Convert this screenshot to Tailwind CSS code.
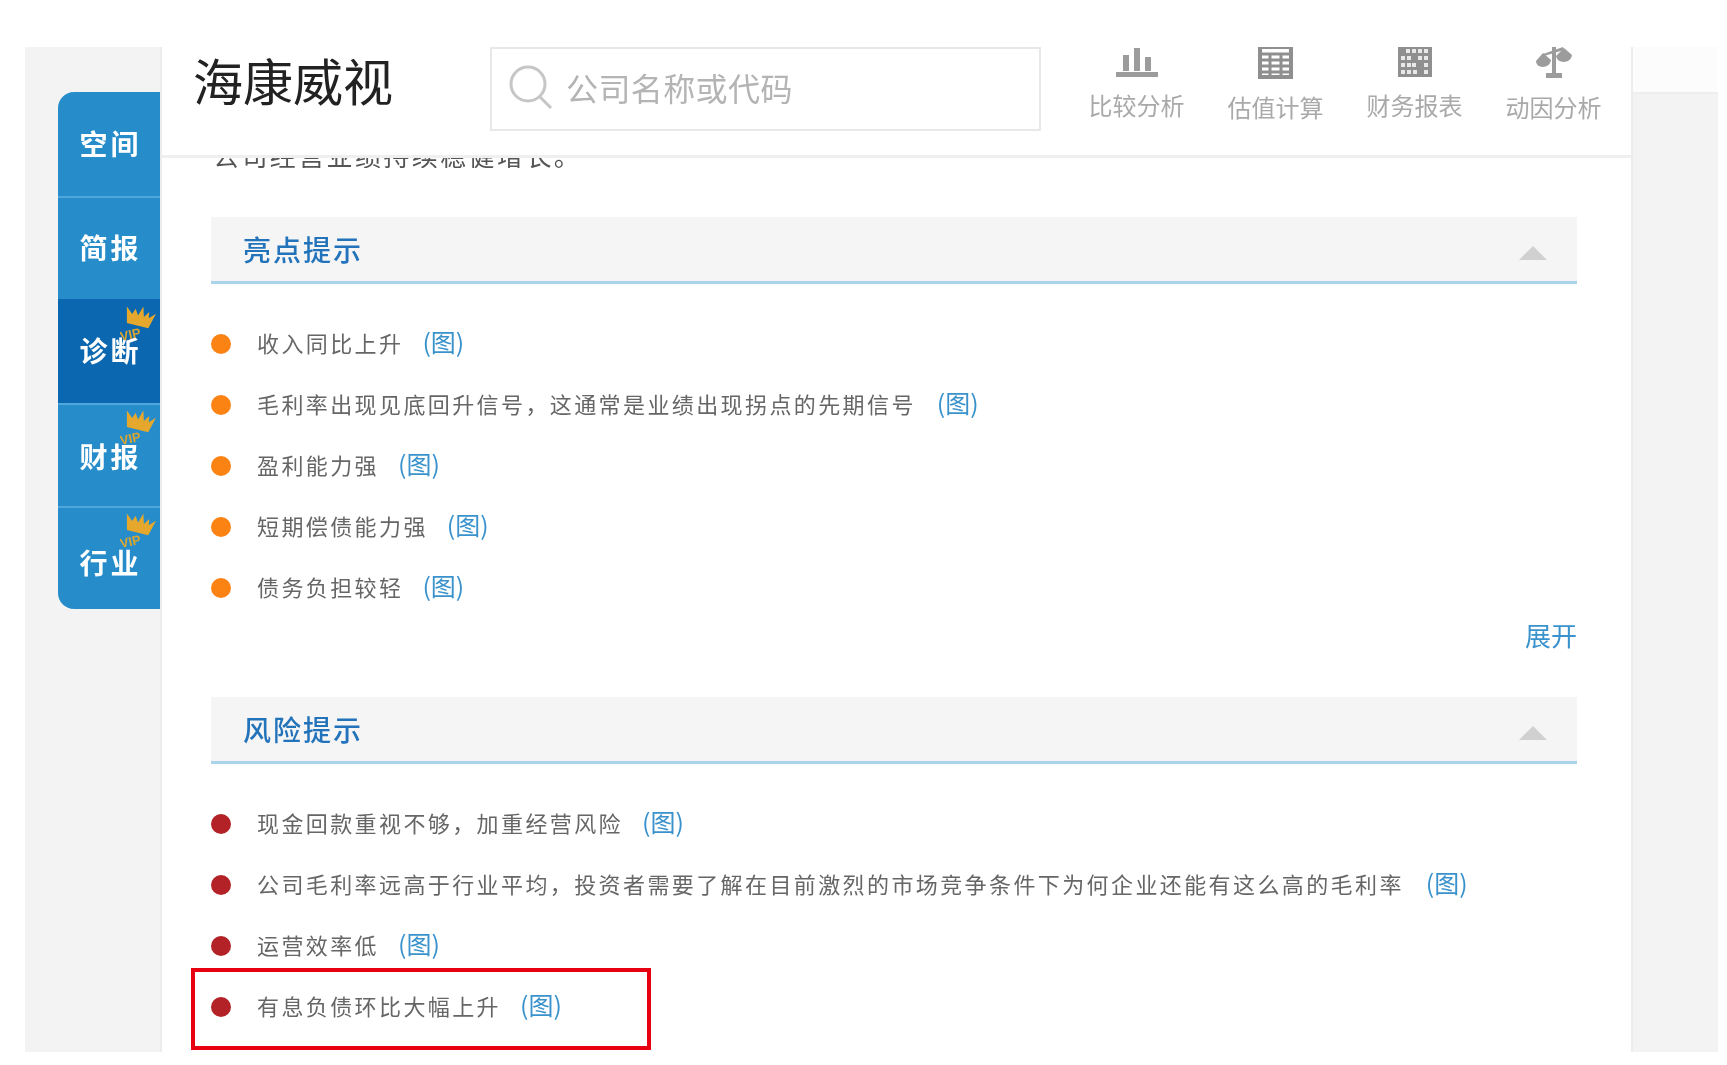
<!DOCTYPE html>
<html lang="zh-CN">

<head>
    <meta charset="UTF-8" />
    <meta name="viewport" content="width=device-width, initial-scale=1.0" />
    <script src="https://cdn.jsdelivr.net/npm/@tailwindcss/browser@4"></script>
    <title>海康威视</title>
</head>

<body class="bg-white">
    <div class="w-[1727px] h-[1065px] pt-[47px] pl-[25px] overflow-hidden bg-white blur-[0.7px] font-['Noto_Sans_CJK_SC','Noto_Sans',sans-serif]">
        <div class="relative flex w-[1693px] h-[1005px] overflow-hidden bg-[#f3f3f3]">

            <!-- Side tabs -->
            <aside class="w-[135px] shrink-0 pt-[45px] pl-[33px]">
                <nav class="w-[102px] h-[517px] flex flex-col rounded-l-[16px] overflow-hidden bg-[#268dca] text-white text-[28px] font-bold tracking-[3px]">
                    <a class="h-[104px] pl-[3px] pb-[3px] flex items-center justify-center">空间</a>
                    <a class="h-[103px] pl-[3px] pb-[3px] flex items-center justify-center border-t-2 border-[#4fa6db]">简报</a>
                    <a class="relative h-[104px] pl-[3px] pb-[2px] flex items-center justify-center bg-[#0b68b0]">诊断
                        <svg class="absolute right-[2px] top-[5px] w-[38px] h-[38px]" viewBox="0 0 38 38">
                            <path transform="rotate(14 20 12)" d="M9 22 L5 6 L12 12 L14 6 L18 12 L21 2 L24 12 L28 6 L29 12 L35 6 L31 22 Z" fill="#e5a82d" />
                            <text transform="translate(1 37) rotate(-12)" font-size="13" font-weight="700" letter-spacing="0" fill="#d9a531" font-family="Liberation Sans, sans-serif">VIP</text>
                        </svg>
                    </a>
                    <a class="relative h-[103px] pl-[3px] flex items-center justify-center border-t-2 border-[#4fa6db]">财报
                        <svg class="absolute right-[2px] top-[3px] w-[38px] h-[38px]" viewBox="0 0 38 38">
                            <path transform="rotate(14 20 12)" d="M9 22 L5 6 L12 12 L14 6 L18 12 L21 2 L24 12 L28 6 L29 12 L35 6 L31 22 Z" fill="#e5a82d" />
                            <text transform="translate(1 37) rotate(-12)" font-size="13" font-weight="700" letter-spacing="0" fill="#d9a531" font-family="Liberation Sans, sans-serif">VIP</text>
                        </svg>
                    </a>
                    <a class="relative h-[103px] pl-[3px] pt-[6px] flex items-center justify-center border-t-2 border-[#4fa6db]">行业
                        <svg class="absolute right-[2px] top-[3px] w-[38px] h-[38px]" viewBox="0 0 38 38">
                            <path transform="rotate(14 20 12)" d="M9 22 L5 6 L12 12 L14 6 L18 12 L21 2 L24 12 L28 6 L29 12 L35 6 L31 22 Z" fill="#e5a82d" />
                            <text transform="translate(1 37) rotate(-12)" font-size="13" font-weight="700" letter-spacing="0" fill="#d9a531" font-family="Liberation Sans, sans-serif">VIP</text>
                        </svg>
                    </a>
                </nav>
            </aside>

            <!-- Main panel -->
            <main class="w-[1473px] shrink-0 bg-white border-x-2 border-[#ececec]">
                <header class="flex h-[111px] border-b-[3px] border-[#efefef] pl-[31px]">
                    <h1 class="w-[297px] shrink-0 pt-[1px] text-[50px] leading-[62px] font-normal text-[#222]">海康威视</h1>
                    <div class="w-[551px] h-[84px] shrink-0 flex items-center gap-[12px] pl-[16px] pb-[5px] border-2 border-[#e8e8e8] text-[32px] tracking-[0.4px] text-[#b4b4b4]">
                        <svg class="w-[46px] h-[46px] shrink-0" viewBox="0 0 46 46" fill="none" stroke="#c6c6c6">
                            <circle cx="20" cy="20" r="17" stroke-width="3" />
                            <path d="M32 33 L43 44" stroke-width="3" />
                        </svg>
                        <span>公司名称或代码</span>
                    </div>
                    <nav class="ml-[26px] flex text-[24px] leading-[32px] text-[#a9a9a9]">
                        <a class="w-[139px] flex flex-col items-center">
                            <svg class="w-[42px] h-[30px] mb-[12px]" viewBox="0 0 42 30" fill="#9c9c9c">
                                <rect x="7" y="8" width="6" height="16" />
                                <rect x="18" y="1" width="6" height="23" />
                                <rect x="29" y="10" width="6" height="14" />
                                <rect x="0" y="25" width="42" height="5" />
                            </svg>
                            <span>比较分析</span>
                        </a>
                        <a class="w-[139px] flex flex-col items-center">
                            <svg class="w-[35px] h-[32px] mb-[12px]" viewBox="0 0 35 32" fill="none" stroke="#8f8f8f">
                                <rect x="2" y="0" width="31" height="30" stroke-width="4" />
                                <path d="M3 7 H32 M3 13 H32 M3 19 H32 M3 25 H32 M12 7 V30 M23 7 V30" stroke-width="3" />
                            </svg>
                            <span>估值计算</span>
                        </a>
                        <a class="w-[139px] flex flex-col items-center">
                            <svg class="w-[34px] h-[30px] mb-[12px]" viewBox="0 0 34 30">
                                <rect width="34" height="30" fill="#8f8f8f" />
                                <path d="M8 2 H12 V6 H8 Z M14 2 H18 V6 H14 Z M20 2 H24 V6 H20 Z M26 2 H30 V6 H26 Z M3 9 H7 V13 H3 Z M9 9 H13 V13 H9 Z M20 9 H24 V13 H20 Z M26 9 H30 V13 H26 Z M3 16 H7 V20 H3 Z M9 16 H13 V20 H9 Z M14 16 H18 V20 H14 Z M26 16 H30 V20 H26 Z M3 23 H7 V27 H3 Z M9 23 H13 V27 H9 Z M15 23 H19 V27 H15 Z M26 23 H30 V27 H26 Z" fill="#e8e8e8" />
                            </svg>
                            <span>财务报表</span>
                        </a>
                        <a class="w-[139px] flex flex-col items-center">
                            <svg class="w-[38px] h-[32px] mb-[12px]" viewBox="0 0 38 32" fill="#9c9c9c">
                                <path d="M17 0 H21 V26 H27 V31 H11 V26 H17 Z" />
                                <path d="M8 6 L1 14 C1 22 15 22 16 13 Z M29 1 L21 9 C22 17 36 17 37 8 Z" />
                                <path d="M8 7 L28 0 L29 3 L9 9 Z" />
                            </svg>
                            <span>动因分析</span>
                        </a>
                    </nav>
                </header>

                <div class="pl-[49px]">
                    <div class="h-[10px] overflow-hidden">
                        <p class="-mt-[18px] pl-[2px] text-[26px] leading-[30px] tracking-[2.4px] text-[#555]">公司经营业绩持续稳健增长。</p>
                    </div>

                    <section class="w-[1366px] mt-[49px]">
                        <div class="flex items-center justify-between h-[67px] pl-[32px] pr-[30px] bg-[#f5f5f5] border-b-[3px] border-[#a9d4ec]">
                            <h2 class="text-[28px] tracking-[2px] font-medium text-[#2373bb]">亮点提示</h2>
                            <span class="mt-[8px] w-0 h-0 border-x-[14px] border-x-transparent border-b-[14px] border-b-[#d0d0d0]"></span>
                        </div>
                        <ul class="mt-[30px] text-[22px] tracking-[2.4px] text-[#666]">
                            <li class="h-[61px] pb-[5px] flex items-center">
                                <span class="mt-[3px] w-[20px] h-[20px] rounded-full bg-[#fb8313] mr-[26px]"></span>收入同比上升
                                <a class="ml-[19px] text-[25px] tracking-normal text-[#3a92cc]">(图)</a>
                            </li>
                            <li class="h-[61px] pb-[5px] flex items-center">
                                <span class="mt-[3px] w-[20px] h-[20px] rounded-full bg-[#fb8313] mr-[26px]"></span>毛利率出现见底回升信号，这通常是业绩出现拐点的先期信号
                                <a class="ml-[21px] text-[25px] tracking-normal text-[#3a92cc]">(图)</a>
                            </li>
                            <li class="h-[61px] pb-[5px] flex items-center">
                                <span class="mt-[3px] w-[20px] h-[20px] rounded-full bg-[#fb8313] mr-[26px]"></span>盈利能力强
                                <a class="ml-[19px] text-[25px] tracking-normal text-[#3a92cc]">(图)</a>
                            </li>
                            <li class="h-[61px] pb-[5px] flex items-center">
                                <span class="mt-[3px] w-[20px] h-[20px] rounded-full bg-[#fb8313] mr-[26px]"></span>短期偿债能力强
                                <a class="ml-[19px] text-[25px] tracking-normal text-[#3a92cc]">(图)</a>
                            </li>
                            <li class="h-[61px] pb-[5px] flex items-center">
                                <span class="mt-[3px] w-[20px] h-[20px] rounded-full bg-[#fb8313] mr-[26px]"></span>债务负担较轻
                                <a class="ml-[19px] text-[25px] tracking-normal text-[#3a92cc]">(图)</a>
                            </li>
                        </ul>
                        <div class="h-[36px] pb-[6px] flex items-center justify-end text-[26px] text-[#3a92cc]">展开</div>
                    </section>

                    <section class="w-[1366px] mt-[42px]">
                        <div class="flex items-center justify-between h-[67px] pl-[32px] pr-[30px] bg-[#f5f5f5] border-b-[3px] border-[#a9d4ec]">
                            <h2 class="text-[28px] tracking-[2px] font-medium text-[#2373bb]">风险提示</h2>
                            <span class="mt-[8px] w-0 h-0 border-x-[14px] border-x-transparent border-b-[14px] border-b-[#d0d0d0]"></span>
                        </div>
                        <ul class="mt-[30px] text-[22px] tracking-[2.4px] text-[#666]">
                            <li class="h-[61px] pb-[5px] flex items-center">
                                <span class="mt-[3px] w-[20px] h-[20px] rounded-full bg-[#b32226] mr-[26px]"></span>现金回款重视不够，加重经营风险
                                <a class="ml-[19px] text-[25px] tracking-normal text-[#3a92cc]">(图)</a>
                            </li>
                            <li class="h-[61px] pb-[5px] flex items-center">
                                <span class="mt-[3px] w-[20px] h-[20px] rounded-full bg-[#b32226] mr-[26px]"></span>公司毛利率远高于行业平均，投资者需要了解在目前激烈的市场竞争条件下为何企业还能有这么高的毛利率
                                <a class="ml-[22px] text-[25px] tracking-normal text-[#3a92cc]">(图)</a>
                            </li>
                            <li class="h-[61px] pb-[5px] flex items-center">
                                <span class="mt-[3px] w-[20px] h-[20px] rounded-full bg-[#b32226] mr-[26px]"></span>运营效率低
                                <a class="ml-[19px] text-[25px] tracking-normal text-[#3a92cc]">(图)</a>
                            </li>
                            <li class="h-[61px] pb-[5px] flex items-center">
                                <span class="mt-[3px] w-[20px] h-[20px] rounded-full bg-[#b32226] mr-[26px]"></span>有息负债环比大幅上升
                                <a class="ml-[19px] text-[25px] tracking-normal text-[#3a92cc]">(图)</a>
                            </li>
                        </ul>
                    </section>
                </div>
            </main>

            <!-- Right gutter -->
            <div class="flex-1">
                <div class="h-[47px] bg-[#fcfcfc] border-b-2 border-[#eeeeee]"></div>
            </div>

            <!-- Red annotation box drawn over the page -->
            <div class="absolute left-[166px] top-[921px] w-[460px] h-[82px] border-[4px] border-[#e60012]"></div>
        </div>
    </div>
</body>

</html>
